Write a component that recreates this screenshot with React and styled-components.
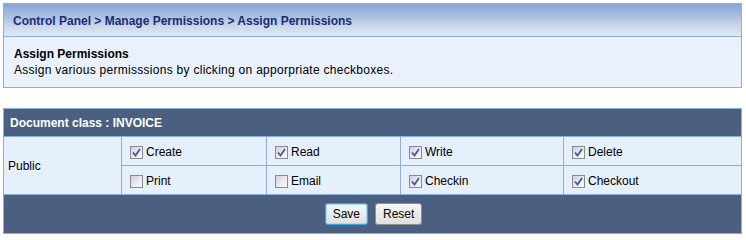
import React from 'react';
import styled, { createGlobalStyle } from 'styled-components';

const GlobalStyle = createGlobalStyle`
    body {
        margin: 0;
        background: #fff;
        font-family: Arial, "Liberation Sans", sans-serif;
        font-size: 12px;
    }
`;

const permissions = [
    [
        { label: 'Create', checked: true },
        { label: 'Read', checked: true },
        { label: 'Write', checked: true },
        { label: 'Delete', checked: true },
    ],
    [
        { label: 'Print', checked: false },
        { label: 'Email', checked: false },
        { label: 'Checkin', checked: true },
        { label: 'Checkout', checked: true },
    ],
];

const CheckBox = ({ checked }) => (
    <Box>
        {checked && (
            <svg width="9" height="9" viewBox="0 0 9 9">
                <path d="M1 4.5 L3.5 7.5 L8 1" fill="none" stroke="#3d5aa8" strokeWidth="1.8" />
            </svg>
        )}
    </Box>
);

const App = () => {
    return (
        <Page>
            <GlobalStyle />
            <InfoPanel>
                <Breadcrumb>Control Panel &gt; Manage Permissions &gt; Assign Permissions</Breadcrumb>
                <Intro>
                    <h4>Assign Permissions</h4>
                    <p>Assign various permisssions by clicking on apporpriate checkboxes.</p>
                </Intro>
            </InfoPanel>

            <PermTable>
                <colgroup>
                    <col style={{ width: 118 }} />
                    <col style={{ width: 145 }} />
                    <col style={{ width: 134 }} />
                    <col style={{ width: 163 }} />
                    <col />
                </colgroup>
                <thead>
                    <tr>
                        <th colSpan={5}>Document class : INVOICE</th>
                    </tr>
                </thead>
                <tbody>
                    {permissions.map((row, i) => (
                        <tr key={i}>
                            {i === 0 && <RoleCell rowSpan={2}>Public</RoleCell>}
                            {row.map((perm) => (
                                <td key={perm.label}>
                                    <PermLabel>
                                        <CheckBox checked={perm.checked} />
                                        {perm.label}
                                    </PermLabel>
                                </td>
                            ))}
                        </tr>
                    ))}
                </tbody>
                <tfoot>
                    <tr>
                        <td colSpan={5}>
                            <Actions>
                                <Button $focused>Save</Button>
                                <Button>Reset</Button>
                            </Actions>
                        </td>
                    </tr>
                </tfoot>
            </PermTable>
        </Page>
    );
};

export default App;

const Page = styled.div`
    padding: 3px 4px 3px 3px;
`;

const InfoPanel = styled.div`
    border: 1px solid #8eaedb;
    background: #e8f1fc;
`;

const Breadcrumb = styled.div`
    height: 32px;
    line-height: 34px;
    padding-left: 9px;
    font-weight: bold;
    color: #1c2c78;
    border-bottom: 1px solid #8eaedb;
    background: linear-gradient(180deg, #88a5d3 0%, #a6bcde 35%, #cbd8eb 70%, #e0e8f3 100%);
`;

const Intro = styled.div`
    padding: 9px 10px;
    color: #000;

    h4 {
        margin: 0;
        font-size: 12px;
        font-weight: bold;
        line-height: 16px;
    }

    p {
        margin: 0;
        line-height: 16px;
        letter-spacing: 0.28px;
    }
`;

const PermTable = styled.table`
    width: 100%;
    margin-top: 20px;
    border-collapse: collapse;
    table-layout: fixed;
    border: 1px solid #8eaedb;

    th {
        height: 27px;
        padding: 0 6px;
        text-align: left;
        font-weight: bold;
        color: #fff;
        background: #4b5f80;
    }

    tbody td {
        height: 26px;
        padding: 2px 8px 0;
        background: #e6f0fc;
        border: 1px solid #8eaedb;
        color: #000;
    }

    tfoot td {
        height: 38px;
        background: #4b5f80;
        padding: 0;
    }
`;

const RoleCell = styled.td`
    && {
        padding: 0 4px;
    }
`;

const PermLabel = styled.label`
    display: flex;
    align-items: center;
    gap: 3px;
    font-size: 12px;
`;

const Box = styled.span`
    box-sizing: border-box;
    width: 13px;
    height: 13px;
    display: inline-flex;
    align-items: center;
    justify-content: center;
    border: 1px solid #8a8a92;
    background: linear-gradient(135deg, #cfcfd6 0%, #eeeef2 60%, #fbfbfc 100%);
`;

const Actions = styled.div`
    display: flex;
    justify-content: center;
    gap: 7px;
    padding-left: 2px;
`;

const Button = styled.button`
    height: 22px;
    padding: 0 7px;
    font-family: Arial, "Liberation Sans", sans-serif;
    font-size: 12px;
    color: #000;
    border: 1px solid ${(p) => (p.$focused ? '#3aa7e4' : '#8f8f8f')};
    border-radius: 3px;
    background: linear-gradient(180deg, #f6f6f6 0%, #e0e0e0 100%);
    box-shadow: ${(p) => (p.$focused ? 'inset 0 0 0 1px #a9dcf6' : 'none')};
`;
